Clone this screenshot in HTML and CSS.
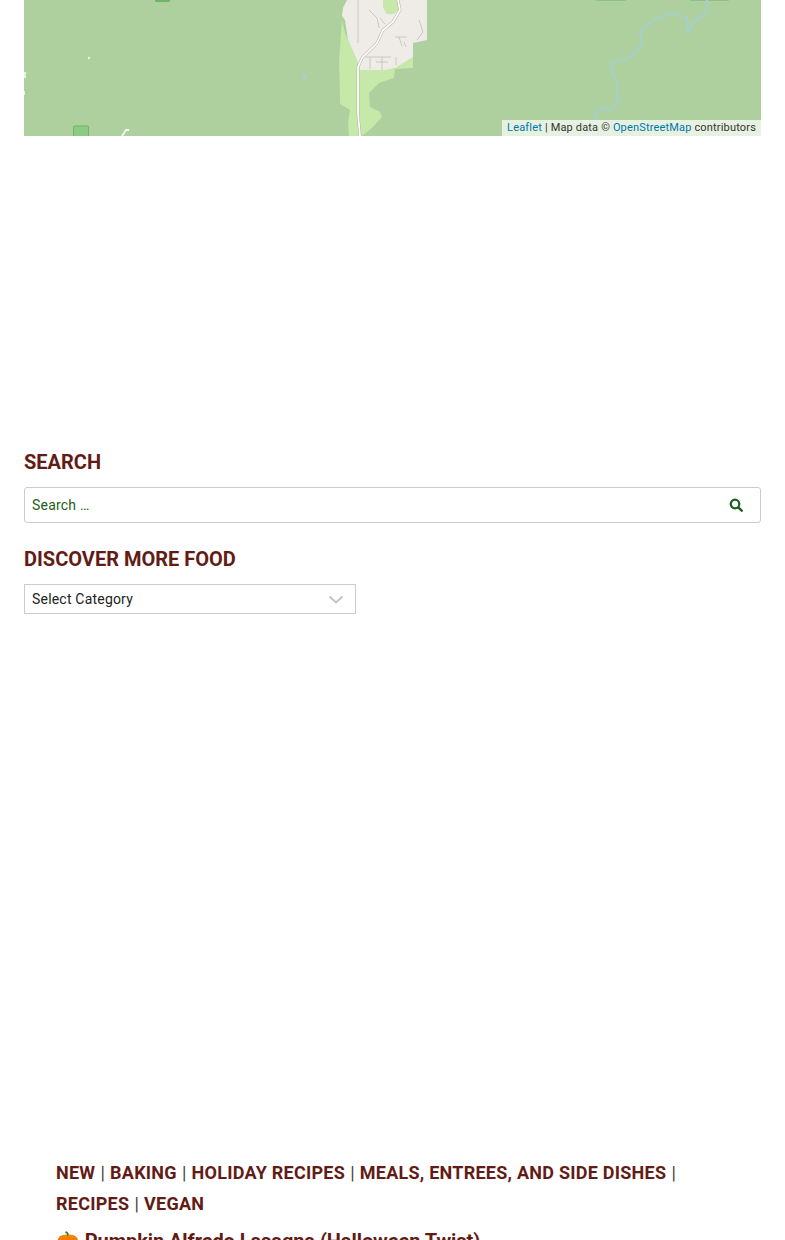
FILE: index.html
```html
<!DOCTYPE html>
<html lang="en">
<head>
    <meta charset="UTF-8">
    <meta name="viewport" content="width=device-width, initial-scale=1.0">
    <title>Discover More Food</title>
    <link rel="stylesheet" href="styles.css">
</head>
<body>
    <div class="page">
        <div class="map">
            <svg class="map-tiles" width="737" height="136" viewBox="0 0 737 136">
                <!-- parks along the top and bottom edge -->
                <rect x="131" y="-4" width="15" height="6" rx="1" fill="#72b46c"/>
                <rect x="572" y="-4" width="30" height="4.500" rx="1" fill="#72b46c"/>
                <rect x="666" y="-4" width="39" height="4.500" rx="1" fill="#72b46c"/>
                <rect x="49.500" y="126" width="15" height="12" rx="1" fill="#8ccb83" stroke="#74b26f"/>
                <!-- little clearings -->
                <path d="M0 72h2v6H0zM0 91h1v4H0z" fill="#e8f0df"/>
                <circle cx="65" cy="58" r="1.200" fill="#eef5e8"/>
                <path d="M98 136l4-6h3" fill="none" stroke="#f4f6f0" stroke-width="1.800"/>
                <path d="M280 74l3 3-3 3-2-3z" fill="#a9cddc"/>
                <!-- town -->
                <path d="M323 0h80v40l-14 3v25l-18 0-10 3h-25l-2-8-10-23-3-20-3-4 1-8z" fill="#efebe6"/>
                <path d="M359 0h15l2 8-6 6h-7l-4-7z" fill="#c6e8a8"/>
                <path d="M318 20l3 13 3 7 10 23 2 7h25l10-2 18-11v11l-18 1-1 9-15 5-10 10 1 14 10 5 2 5-10 11-10 8h-13l-1-13 2-13-10-6 0-6-1-37z" fill="#c6e8a8"/>
                <path d="M334 0v43M345 10l8 8 2 10M356 18l5 6M371 37h12M375 37l3 9M380 42l2 5M341 57h26M346 57v12M358 57v13M352 62h12M372 57v8M395 20l4 12-6 8" fill="none" stroke="#b3aeaa" stroke-width=".6"/>
                <path d="M374 0l2 10-7 12-10 8-6 13-15 15-4 9v46l2 23" fill="none" stroke="#b9b5ad" stroke-width="2.800"/>
                <path d="M374 0l2 10-7 12-10 8-6 13-15 15-4 9v46l2 23" fill="none" stroke="#fff" stroke-width="1.700"/>
                <!-- river -->
                <path d="M683 0l0 10-6 7-8 6-5 10-1-15-15-5-19 7-13 13 2 10-12 15-17 4-2 8 6 13 1 20-8 7-7-3-8 8-2 10-2 11" fill="none" stroke="#a7cfc9" stroke-width="2.300" stroke-linejoin="round"/>
            </svg>
            <div class="map-credit"><a href="#">Leaflet</a> | Map data © <a href="#">OpenStreetMap</a> contributors</div>
        </div>

        <section class="widget widget-search">
            <h2 class="widget-title">Search</h2>
            <form class="search-form">
                <input class="search-field" type="search" placeholder="Search …">
                <button class="search-submit" type="button" aria-label="Search">
                    <svg width="14" height="14" viewBox="0 0 14 14">
                        <circle cx="6" cy="6" r="4.300" fill="none" stroke="#1f5c20" stroke-width="2.200"/>
                        <path d="M9.300 9.300l3.400 3.400" stroke="#1f5c20" stroke-width="2.400" stroke-linecap="round"/>
                    </svg>
                </button>
            </form>
        </section>

        <section class="widget widget-categories">
            <h2 class="widget-title">Discover More Food</h2>
            <div class="select-box">
                <span>Select Category</span>
                <svg width="16" height="9" viewBox="0 0 16 9">
                    <path d="M1.500 1.500L8 7.500l6.500-6" fill="none" stroke="#c4c4c4" stroke-width="2"/>
                </svg>
            </div>
        </section>

        <article class="post">
            <div class="post-cats">
                <a href="#">New</a> | <a href="#">Baking</a> | <a href="#">Holiday Recipes</a> | <a href="#">Meals, Entrees, and Side Dishes</a> | <a href="#">Recipes</a> | <a href="#">Vegan</a>
            </div>
            <h3 class="post-title"><span class="post-emoji">🎃</span> Pumpkin Alfredo Lasagna (Halloween Twist)</h3>
        </article>
    </div>
</body>
</html>
```

FILE: styles.css
```css
html, body {
    height: 1240px;
    overflow: hidden;
}
body {
    margin: 0;
    font-family: Roboto, "Liberation Sans", sans-serif;
    background-color: #fff;
    color: #222;
}
.page {
    padding: 0 24px;
}
.map {
    position: relative;
    height: 136px;
    background-color: #add09e;
    overflow: hidden;
}
.map-tiles {
    display: block;
}
.map-credit {
    position: absolute;
    right: 0;
    bottom: 0;
    height: 16px;
    padding: 0 5px;
    background-color: rgba(255, 255, 255, 0.7);
    font-size: 11px;
    line-height: 16px;
    letter-spacing: 0.17px;
    color: #333;
}
.map-credit a {
    color: #0078a8;
    text-decoration: none;
}
.widget-title {
    margin: 0 0 12px;
    font-size: 20px;
    line-height: 26px;
    font-weight: 700;
    text-transform: uppercase;
    color: #621c15;
}
.widget-search {
    margin-top: 313px;
}
.search-form {
    position: relative;
}
.search-field {
    display: block;
    box-sizing: border-box;
    width: 100%;
    height: 36px;
    padding: 0 7px;
    border: 1px solid #ccc;
    border-radius: 3px;
    font-family: inherit;
    font-size: 14px;
    letter-spacing: 0.2px;
    color: #1f5c20;
    outline: none;
    -webkit-appearance: none;
}
.search-field::placeholder {
    color: #1f5c20;
    opacity: 1;
}
.search-submit {
    position: absolute;
    top: 11px;
    right: 18px;
    padding: 0;
    border: 0;
    background: none;
    line-height: 0;
}
.widget-categories {
    margin-top: 23px;
}
.select-box {
    box-sizing: border-box;
    display: flex;
    align-items: center;
    justify-content: space-between;
    width: 332px;
    height: 30px;
    padding: 0 11px 0 7px;
    border: 1px solid #ccc;
    font-size: 14px;
    letter-spacing: 0.2px;
    color: #222;
}
.post {
    margin-top: 543px;
    padding: 0 32px;
}
.post-cats {
    font-size: 18px;
    line-height: 31px;
    word-spacing: 0.7px;
    color: #444;
}
.post-cats a {
    font-weight: 700;
    letter-spacing: 0.25px;
    word-spacing: 0;
    text-transform: uppercase;
    text-decoration: none;
    color: #621c15;
}
.post-title {
    margin: 7px 0 0;
    font-size: 20px;
    line-height: 30px;
    font-weight: 700;
    letter-spacing: -0.08px;
    color: #621c15;
}
.post-emoji {
    font-size: 19px;
}
```
